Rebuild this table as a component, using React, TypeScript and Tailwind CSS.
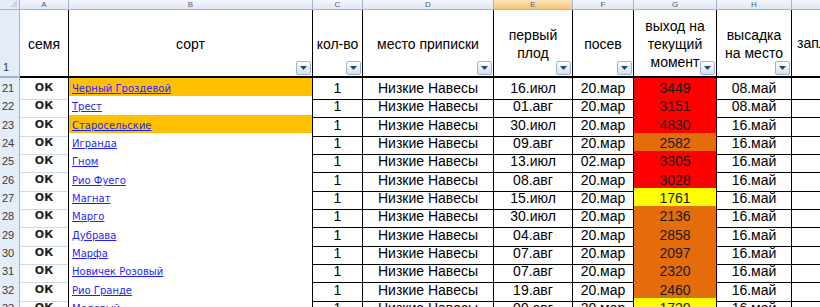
import React from 'react';

type Level = 'red' | 'orange' | 'yellow';

type Row = {
  num: number;
  name: string;
  highlight?: boolean;
  fruit: string;
  sow: string;
  yieldNow: number;
  level: Level;
  plant: string;
};

const rows: Row[] = [
  { num: 21, name: 'Черный Гроздевой', highlight: true, fruit: '16.июл', sow: '20.мар', yieldNow: 3449, level: 'red', plant: '08.май' },
  { num: 22, name: 'Трест', fruit: '01.авг', sow: '20.мар', yieldNow: 3151, level: 'red', plant: '08.май' },
  { num: 23, name: 'Старосельские', highlight: true, fruit: '30.июл', sow: '20.мар', yieldNow: 4830, level: 'red', plant: '16.май' },
  { num: 24, name: 'Игранда', fruit: '09.авг', sow: '20.мар', yieldNow: 2582, level: 'orange', plant: '16.май' },
  { num: 25, name: 'Гном', fruit: '13.июл', sow: '02.мар', yieldNow: 3305, level: 'red', plant: '16.май' },
  { num: 26, name: 'Рио Фуего', fruit: '08.авг', sow: '20.мар', yieldNow: 3028, level: 'red', plant: '16.май' },
  { num: 27, name: 'Магнат', fruit: '15.июл', sow: '20.мар', yieldNow: 1761, level: 'yellow', plant: '16.май' },
  { num: 28, name: 'Марго', fruit: '30.июл', sow: '20.мар', yieldNow: 2136, level: 'orange', plant: '16.май' },
  { num: 29, name: 'Дубрава', fruit: '04.авг', sow: '20.мар', yieldNow: 2858, level: 'orange', plant: '16.май' },
  { num: 30, name: 'Марфа', fruit: '07.авг', sow: '20.мар', yieldNow: 2097, level: 'orange', plant: '16.май' },
  { num: 31, name: 'Новичек Розовый', fruit: '07.авг', sow: '20.мар', yieldNow: 2320, level: 'orange', plant: '16.май' },
  { num: 32, name: 'Рио Гранде', fruit: '19.авг', sow: '20.мар', yieldNow: 2460, level: 'orange', plant: '16.май' },
  { num: 33, name: 'Медовый', fruit: '09.авг', sow: '20.мар', yieldNow: 1720, level: 'yellow', plant: '16.май' },
];

// excel rows come out at ~18.4px, so alternate 18/19
const heights = ['h-[18px]', 'h-[19px]', 'h-[18px]', 'h-[18px]', 'h-[19px]', 'h-[18px]', 'h-[18px]', 'h-[19px]', 'h-[18px]', 'h-[18px]', 'h-[19px]', 'h-[18px]', 'h-[18px]'];

const levelBg: Record<Level, string> = {
  red: 'bg-[#ff0000]',
  orange: 'bg-[#e46c0a]',
  yellow: 'bg-[#ffff00]',
};

const cols = 'grid grid-cols-[20px_49px_244px_50px_131px_79px_61px_83px_75px_100px]';

function FilterButton() {
  return (
    <span className="absolute right-[1px] bottom-[1px] w-[15px] h-[14px] rounded-[2px] border border-[#9fb2cc] bg-linear-to-b from-white to-[#d6e0ee] flex items-center justify-center">
      <svg width="7" height="4" viewBox="0 0 7 4">
        <path d="M0 0h7L3.5 4z" fill="#25466e" />
      </svg>
    </span>
  );
}

function Letter({ children, active }: { children: React.ReactNode; active?: boolean }) {
  return (
    <div
      className={
        'h-[10px] border-r border-b border-[#9eb6ce] bg-linear-to-b flex items-center justify-center text-[8px] leading-[9px] text-[#4c5d77] ' +
        (active ? 'from-[#fde6bd] to-[#f8c374]' : 'from-[#f4f7fb] to-[#dfe7f2]')
      }
    >
      {children}
    </div>
  );
}

function HeadCell({ children, filter = true }: { children?: React.ReactNode; filter?: boolean }) {
  return (
    <div className="relative h-[68px] border-b-2 border-b-black border-r border-r-black flex items-center justify-center text-center text-[14px] leading-[18px] text-black">
      <span className="pt-[2px]">{children}</span>
      {filter && <FilterButton />}
    </div>
  );
}

export default function App() {
  return (
    <div className="w-[820px] h-[307px] overflow-hidden bg-white font-['Liberation_Sans',Arial,sans-serif]">
      {/* column letters */}
      <div className={cols}>
        <div className="h-[10px] border-r border-b border-[#9eb6ce] bg-[#e4ecf7] flex items-start justify-end pr-[2px]">
          <svg width="7" height="7" viewBox="0 0 7 7">
            <path d="M7 0v7H0z" fill="#c9d5e5" />
          </svg>
        </div>
        <Letter>A</Letter>
        <Letter>B</Letter>
        <Letter>C</Letter>
        <Letter>D</Letter>
        <Letter active>E</Letter>
        <Letter>F</Letter>
        <Letter>G</Letter>
        <Letter>H</Letter>
        <Letter>I</Letter>
      </div>

      {/* header row 1 */}
      <div className={cols}>
        <div className="h-[68px] bg-[#e4ecf7] border-r border-b-2 border-[#9eb6ce] flex items-end pl-[3px] pb-[1px] text-[11px] text-[#333]">
          1
        </div>
        <HeadCell filter={false}>семя</HeadCell>
        <HeadCell>сорт</HeadCell>
        <HeadCell>кол-во</HeadCell>
        <HeadCell>место приписки</HeadCell>
        <HeadCell>
          первый
          <br />
          плод
        </HeadCell>
        <HeadCell>посев</HeadCell>
        <HeadCell>
          выход на
          <br />
          текущий
          <br />
          момент
        </HeadCell>
        <HeadCell>
          высадка
          <br />
          на место
        </HeadCell>
        <div className="h-[68px] border-b-2 border-b-black flex items-center pl-[5px] text-[14px] whitespace-nowrap">
          запланировано
        </div>
      </div>

      {/* data rows */}
      {rows.map((r, i) => (
        <div key={r.num} className={cols + ' ' + heights[i]}>
          <div className="bg-[#e4ecf7] border-r border-b border-[#9eb6ce] flex items-center pl-[2px] text-[11px] text-[#3a3a3a]">
            {r.num}
          </div>
          <div className="border-r border-b border-r-black border-b-[#d0d7e5] flex items-center justify-center font-['DejaVu_Sans',sans-serif] font-bold text-[11px] text-[#222]">
            ОК
          </div>
          <div className={'border-r border-b border-black flex items-center pl-[3px] ' + (r.highlight ? 'bg-[#ffc000]' : 'bg-white')}>
            <a href="#" className="font-['DejaVu_Sans',sans-serif] text-[10px] text-[#1f1fff] underline">
              {r.name}
            </a>
          </div>
          <div className="border-r border-b border-black flex items-center justify-center text-[14px]">1</div>
          <div className="border-r border-b border-black flex items-center justify-center text-[14px]">Низкие Навесы</div>
          <div className="border-r border-b border-black flex items-center justify-center text-[14px]">{r.fruit}</div>
          <div className="border-r border-b border-black flex items-center justify-center text-[14px]">{r.sow}</div>
          <div className={'border-r border-b border-black flex items-center justify-center text-[14px] text-[#1a1a1a] ' + levelBg[r.level]}>
            {r.yieldNow}
          </div>
          <div className="border-r border-b border-black flex items-center justify-center text-[14px]">{r.plant}</div>
          <div className="border-b border-black" />
        </div>
      ))}
    </div>
  );
}
